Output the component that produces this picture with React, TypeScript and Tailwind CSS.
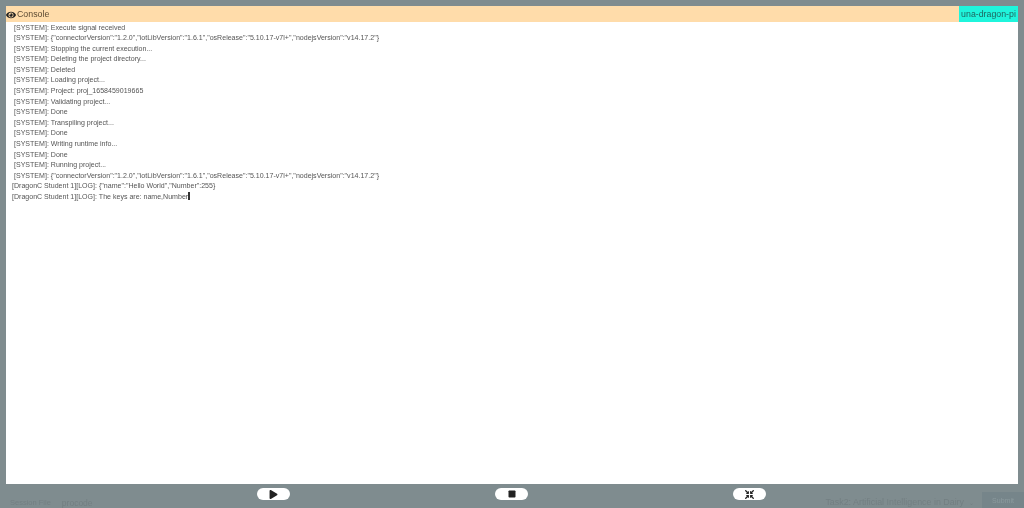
import { FaCompressArrowsAlt, FaEye, FaPlay, FaStop } from "react-icons/fa";

const lines = [
  { from: "[SYSTEM]", text: "Execute signal received" },
  {
    from: "[SYSTEM]",
    text: '{"connectorVersion":"1.2.0","iotLibVersion":"1.6.1","osRelease":"5.10.17-v7l+","nodejsVersion":"v14.17.2"}',
  },
  { from: "[SYSTEM]", text: "Stopping the current execution..." },
  { from: "[SYSTEM]", text: "Deleting the project directory..." },
  { from: "[SYSTEM]", text: "Deleted" },
  { from: "[SYSTEM]", text: "Loading project..." },
  { from: "[SYSTEM]", text: "Project: proj_1658459019665" },
  { from: "[SYSTEM]", text: "Validating project..." },
  { from: "[SYSTEM]", text: "Done" },
  { from: "[SYSTEM]", text: "Transpiling project..." },
  { from: "[SYSTEM]", text: "Done" },
  { from: "[SYSTEM]", text: "Writing runtime info..." },
  { from: "[SYSTEM]", text: "Done" },
  { from: "[SYSTEM]", text: "Running project..." },
  {
    from: "[SYSTEM]",
    text: '{"connectorVersion":"1.2.0","iotLibVersion":"1.6.1","osRelease":"5.10.17-v7l+","nodejsVersion":"v14.17.2"}',
  },
  { from: "[DragonC Student 1][LOG]", text: '{"name":"Hello World","Number":255}' },
  { from: "[DragonC Student 1][LOG]", text: "The keys are: name,Number", cursor: true },
];

const ControlButton = ({ children }: { children: React.ReactNode }) => (
  <button className="flex h-[12px] w-[33px] items-center justify-center rounded-full bg-white text-[#222]">
    {children}
  </button>
);

export default function App() {
  return (
    <div className="relative h-[508px] w-[1024px] overflow-hidden bg-[#7f8c8f] font-['Liberation_Sans',sans-serif] blur-[0.35px]">
      {/* page behind the backdrop, only the footer still shows */}
      <div className="flex h-full items-end justify-between pl-[10px] leading-none text-[#737f82]">
        <div className="flex items-center gap-[11px] pb-[1px]">
          <span className="text-[7.5px]">Session File</span>
          <span className="text-[8.5px]">procode</span>
        </div>
        <div className="flex items-end gap-[8px]">
          <span className="flex items-center gap-[5px] pb-[1px] text-[8.9px]">
            Task2: Artificial Intelligence in Dairy
            <span className="text-[6px]">⌄</span>
          </span>
          <span className="flex h-[16px] w-[42px] items-center justify-center bg-[#76858a] text-[7px] text-[#8b9a9e]">
            Submit
          </span>
        </div>
      </div>

      <div className="absolute inset-0 flex flex-col px-[6px] pt-[6px]">
        <div className="flex h-[478px] flex-col bg-white">
          <div className="flex h-[16px] items-center justify-between bg-[#ffdcaa]">
            <div className="flex items-center gap-[1px] pt-[1px] text-[8.8px] text-[#5c4a33]">
              <FaEye size={10} className="text-[#222]" />
              <span>Console</span>
            </div>
            <span className="flex h-full w-[59px] items-center justify-center whitespace-nowrap bg-[#1ff5dc] pt-[1px] text-[8.8px] text-[#1f6660]">
              una-dragon-pi
            </span>
          </div>
          <div className="flex flex-col pt-[0.5px] text-[7.05px] leading-[10.6px] text-[#555]">
            {lines.map((line, i) => (
              <div
                key={i}
                className={line.from === "[SYSTEM]" ? "pl-[8px]" : "pl-[6px]"}
              >
                {line.from}: {line.text}
                {line.cursor && (
                  <span className="inline-block h-[8px] w-[2px] bg-[#333] align-[-1px]" />
                )}
              </div>
            ))}
          </div>
        </div>
        <div className="flex justify-between pl-[251px] pr-[252px] pt-[4px]">
          <ControlButton>
            <FaPlay size={9} />
          </ControlButton>
          <ControlButton>
            <FaStop size={8} />
          </ControlButton>
          <ControlButton>
            <FaCompressArrowsAlt size={9} />
          </ControlButton>
        </div>
      </div>
    </div>
  );
}
